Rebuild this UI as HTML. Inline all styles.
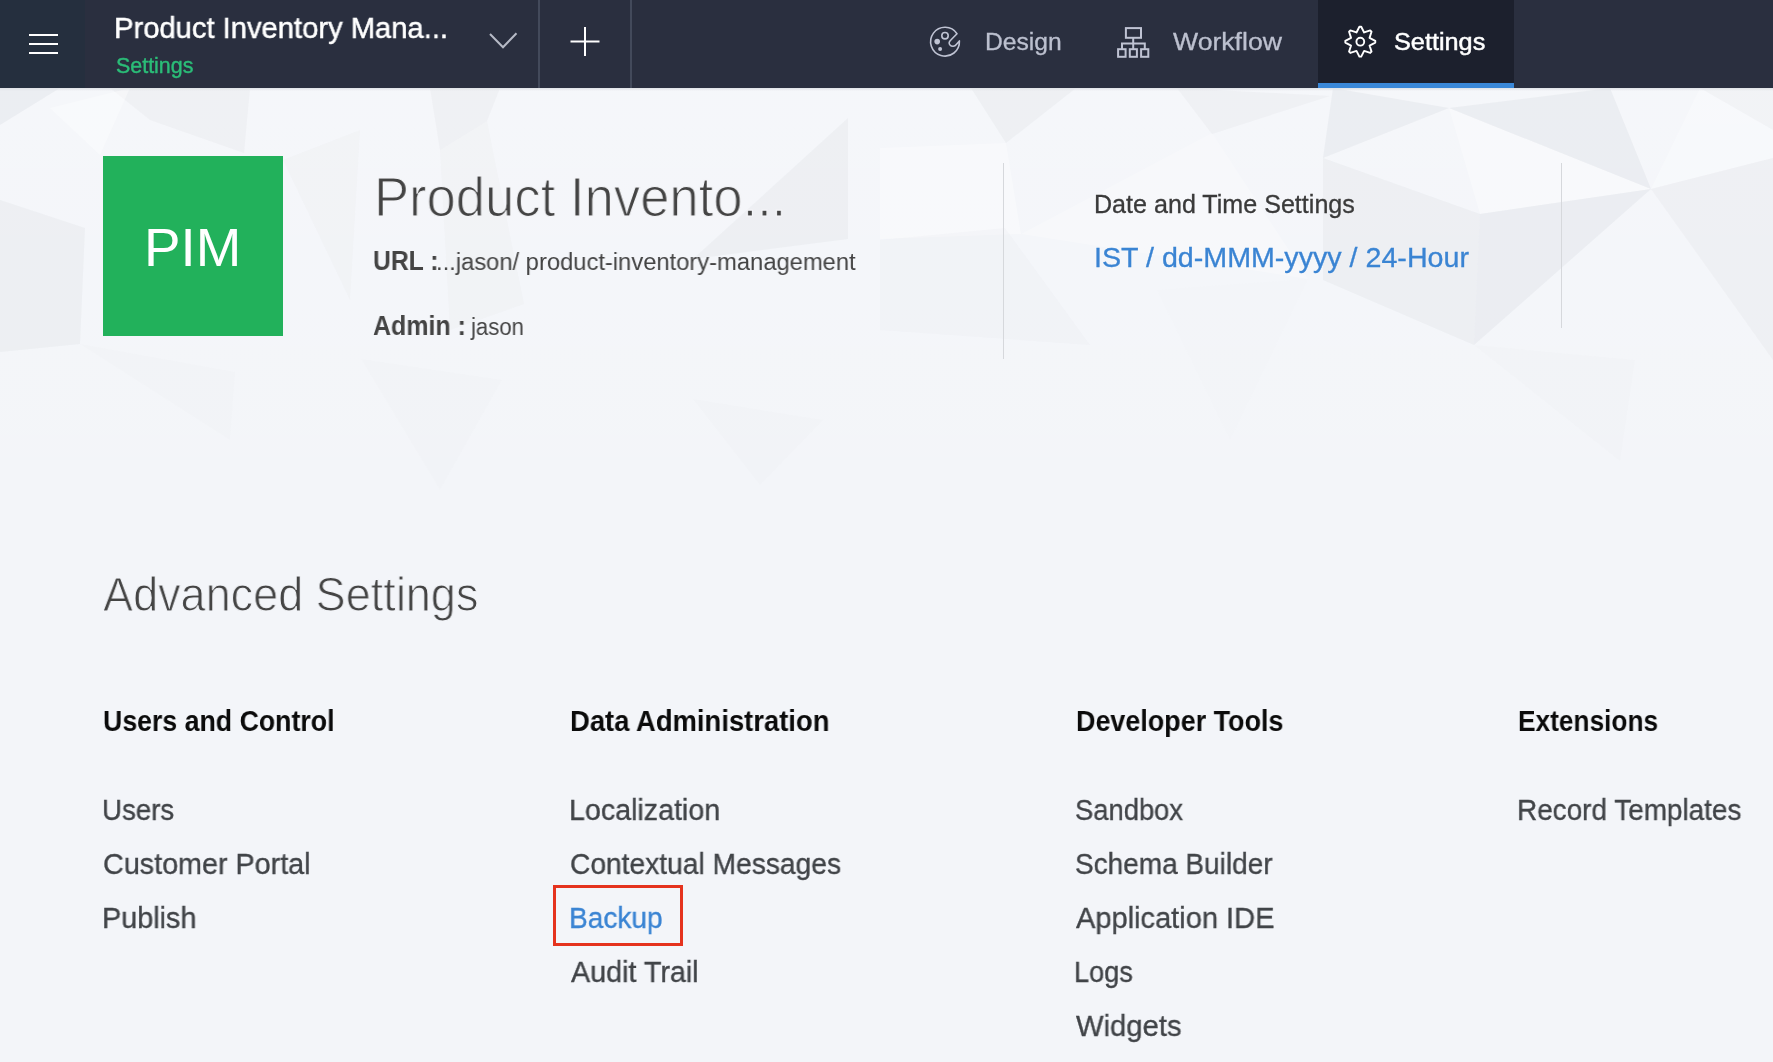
<!DOCTYPE html>
<html><head><meta charset="utf-8">
<style>
html,body{margin:0;padding:0;width:1773px;height:1062px;overflow:hidden;}
body{background:#f3f5f9;font-family:"Liberation Sans",sans-serif;position:relative;}
.t{position:absolute;white-space:nowrap;line-height:0;transform-origin:0 0;will-change:transform;}
.abs{position:absolute;}
#hdr{position:absolute;left:0;top:0;width:1773px;height:88px;background:#2a2f3f;}
#ham{position:absolute;left:0;top:0;width:85px;height:88px;background:#252f3e;}
.hl{position:absolute;left:29px;width:29px;height:2px;background:#fff;}
.vd{position:absolute;top:0;width:2px;height:88px;background:#434a5b;}
#tab{position:absolute;left:1318px;top:0;width:196px;height:88px;background:#1c202d;}
#tabline{position:absolute;left:1318px;top:83px;width:196px;height:5px;background:#3a88d8;}
#pim{position:absolute;left:103px;top:156px;width:180px;height:180px;background:#22b15b;}
.dv{position:absolute;width:2px;background:#d6d8dc;}
#redbox{position:absolute;left:553px;top:885px;width:124px;height:55px;border:3px solid #e5331e;}
</style></head><body>
<svg class="abs" style="left:0;top:88px" width="1773" height="974" viewBox="0 88 1773 974">
<!--BG-->
<polygon points="880,148 1006,143 1021,234 880,239" fill="#ffffff" fill-opacity="0.35"/>
<polygon points="1021,234 1212,133 1308,279" fill="#ffffff" fill-opacity="0.25"/>
<polygon points="1449,108 1651,189 1480,214" fill="#ffffff" fill-opacity="0.35"/>
<polygon points="1651,189 1773,158 1773,88 1700,88" fill="#ffffff" fill-opacity="0.3"/>
<defs><linearGradient id="wg" x1="0" y1="0" x2="0" y2="1"><stop offset="0" stop-color="#fff" stop-opacity="0.18"/><stop offset="1" stop-color="#fff" stop-opacity="0"/></linearGradient></defs><rect x="0" y="88" width="1773" height="480" fill="url(#wg)"/>
<polygon points="0,88 60,88 0,125" fill="#dcdee2" fill-opacity="0.360"/>
<polygon points="110,88 250,88 244,153 150,120" fill="#dcdee2" fill-opacity="0.240"/>
<polygon points="50,108 130,88 100,155" fill="#ffffff" fill-opacity="0.360"/>
<polygon points="0,200 85,228 80,344 0,352" fill="#dcdee2" fill-opacity="0.280"/>
<polygon points="80,344 235,372 230,440" fill="#dcdee2" fill-opacity="0.056"/>
<polygon points="283,160 360,130 350,300" fill="#dcdee2" fill-opacity="0.120"/>
<polygon points="430,88 500,88 487,121 440,150" fill="#dcdee2" fill-opacity="0.240"/>
<polygon points="487,121 524,304 450,330 440,150" fill="#dcdee2" fill-opacity="0.120"/>
<polygon points="848,118 693,259 848,239" fill="#dcdee2" fill-opacity="0.280"/>
<polygon points="361,359 502,380 440,490" fill="#dcdee2" fill-opacity="0.056"/>
<polygon points="693,399 823,420 760,485" fill="#dcdee2" fill-opacity="0.056"/>
<polygon points="971,88 1076,88 1006,143" fill="#dcdee2" fill-opacity="0.280"/>
<polygon points="1177,88 1330,96 1212,134" fill="#dcdee2" fill-opacity="0.240"/>
<polygon points="880,240 1005,228 1090,345 880,330" fill="#dcdee2" fill-opacity="0.112"/>
<polygon points="1157,290 1308,279 1230,440" fill="#dcdee2" fill-opacity="0.040"/>
<polygon points="1333,88 1449,108 1323,158" fill="#dcdee2" fill-opacity="0.360"/>
<polygon points="1449,108 1651,189 1610,88" fill="#dcdee2" fill-opacity="0.360"/>
<polygon points="1323,158 1480,214 1474,345 1323,280" fill="#dcdee2" fill-opacity="0.280"/>
<polygon points="1480,214 1651,189 1474,345" fill="#dcdee2" fill-opacity="0.360"/>
<polygon points="1651,189 1773,158 1773,360" fill="#dcdee2" fill-opacity="0.240"/>
<polygon points="1474,345 1635,360 1620,461" fill="#dcdee2" fill-opacity="0.056"/>
<polygon points="1700,88 1773,88 1773,130" fill="#dcdee2" fill-opacity="0.200"/>
</svg>
<div id="hdr"></div>
<div id="hshadow" style="position:absolute;left:0;top:88px;width:1773px;height:3px;background:linear-gradient(#dfe2e6,rgba(223,226,230,0));"></div>
<div id="ham"></div>
<div class="hl" style="top:34px"></div>
<div class="hl" style="top:43px"></div>
<div class="hl" style="top:52px"></div>
<div class="vd" style="left:538px"></div>
<div class="vd" style="left:630px"></div>
<div id="tab"></div>
<div id="tabline"></div>
<svg class="abs" style="left:0;top:0" width="1773" height="88" viewBox="0 0 1773 88">
 <polyline points="490,34 503,47.2 516.5,33.2" fill="none" stroke="#b6bac6" stroke-width="2"/>
 <line x1="570.5" y1="41.5" x2="599.5" y2="41.5" stroke="#fff" stroke-width="2"/>
 <line x1="585" y1="27" x2="585" y2="56" stroke="#fff" stroke-width="2"/>
 <g transform="translate(925,22)" fill="none" stroke="#bfc3d3" stroke-width="1.6">
  <path d="M32,11.7 A14.4,14.4 0 1 0 34.4,18.9 L31.3,22.6 C29.8,24.6 26.6,24.8 25,23 C23.6,21.4 24,19.6 25.6,18.3 Z" stroke-linejoin="round"/>
  <circle cx="20" cy="13.7" r="3.2"/>
  <circle cx="12.2" cy="19.6" r="2.8" fill="#bfc3d3" stroke="none"/>
  <circle cx="15.1" cy="26.9" r="2" fill="#bfc3d3" stroke="none"/>
 </g>
 <g transform="translate(1113,22)" fill="none" stroke="#bfc3d3" stroke-width="2">
  <rect x="12.9" y="6.1" width="15.1" height="9.7"/>
  <line x1="20.2" y1="15.8" x2="20.2" y2="27.2"/>
  <polyline points="9,27.2 9,21.5 31.8,21.5 31.8,27.2"/>
  <rect x="5.1" y="27.2" width="7.5" height="7.6"/>
  <rect x="16.8" y="27.2" width="7.1" height="7.6"/>
  <rect x="28.1" y="27.2" width="7.2" height="7.6"/>
 </g>
 <g transform="translate(1360.3,41.7)" fill="none" stroke="#ffffff" stroke-width="1.9" stroke-linejoin="round">
  <path id="gear" d="M-0.92,-14.97 L0.92,-14.97 L3.83,-9.24 L9.94,-11.23 L11.23,-9.94 L9.24,-3.83 L14.97,-0.92 L14.97,0.92 L9.24,3.83 L11.23,9.94 L9.94,11.23 L3.83,9.24 L0.92,14.97 L-0.92,14.97 L-3.83,9.24 L-9.94,11.23 L-11.23,9.94 L-9.24,3.83 L-14.97,0.92 L-14.97,-0.92 L-9.24,-3.83 L-11.23,-9.94 L-9.94,-11.23 L-3.83,-9.24 Z"/>
  <circle cx="0" cy="0" r="3.9"/>
 </g>
</svg>
<div id="pim"></div>
<div class="dv" style="left:1002.5px;top:163px;height:196px;width:1.5px"></div>
<div class="dv" style="left:1560.5px;top:163px;height:165px;width:1.5px"></div>
<div id="redbox"></div>
<div class="t" style="left:113.55px;top:28.44px;font-size:29.89px;font-weight:400;color:#ffffff;transform:scaleX(0.9764);-webkit-text-stroke:0.5px #ffffff;">Product Inventory Mana...</div>
<div class="t" style="left:115.80px;top:65.77px;font-size:21.43px;font-weight:400;color:#2bbd78;transform:scaleX(1.0001);-webkit-text-stroke:0.4px #2bbd78;">Settings</div>
<div class="t" style="left:984.80px;top:41.95px;font-size:24.67px;font-weight:400;color:#bcc0cf;transform:scaleX(0.9981);-webkit-text-stroke:0.3px #bcc0cf;">Design</div>
<div class="t" style="left:1173.30px;top:41.85px;font-size:24.39px;font-weight:400;color:#bcc0cf;transform:scaleX(1.0921);-webkit-text-stroke:0.3px #bcc0cf;">Workflow</div>
<div class="t" style="left:1394.38px;top:42.15px;font-size:24.67px;font-weight:400;color:#ffffff;transform:scaleX(1.0244);-webkit-text-stroke:0.5px #ffffff;">Settings</div>
<div class="t" style="left:144.28px;top:247.64px;font-size:54.42px;font-weight:400;color:#ffffff;transform:scaleX(1.0056);">PIM</div>
<div class="t" style="left:373.56px;top:196.79px;font-size:54.85px;font-weight:400;color:#444444;transform:scaleX(0.9592);-webkit-text-stroke:1.2px #f4f5f8;paint-order:fill stroke;">Product Invento...</div>
<div class="t" style="left:372.99px;top:260.87px;font-size:27.21px;font-weight:700;color:#444444;transform:scaleX(0.9084);">URL :</div>
<div class="t" style="left:435.62px;top:261.69px;font-size:23.97px;font-weight:400;color:#444444;transform:scaleX(0.9905);">...jason/ product-inventory-management</div>
<div class="t" style="left:372.90px;top:325.92px;font-size:26.79px;font-weight:700;color:#444444;transform:scaleX(0.9319);">Admin :</div>
<div class="t" style="left:470.92px;top:326.69px;font-size:23.97px;font-weight:400;color:#444444;transform:scaleX(0.9215);">jason</div>
<div class="t" style="left:1094.30px;top:204.20px;font-size:25.1px;font-weight:400;color:#3a3a3a;transform:scaleX(0.9983);-webkit-text-stroke:0.3px #3a3a3a;">Date and Time Settings</div>
<div class="t" style="left:1094.17px;top:257.97px;font-size:26.93px;font-weight:400;color:#3a84d3;transform:scaleX(1.0636);-webkit-text-stroke:0.3px #3a84d3;">IST / dd-MMM-yyyy / 24-Hour</div>
<div class="t" style="left:102.90px;top:595.34px;font-size:47.8px;font-weight:400;color:#444444;transform:scaleX(0.9417);-webkit-text-stroke:1.0px #f3f5f9;paint-order:fill stroke;">Advanced Settings</div>
<div class="t" style="left:103.10px;top:721.34px;font-size:29.61px;font-weight:700;color:#0b0b0b;transform:scaleX(0.9020);">Users and Control</div>
<div class="t" style="left:570.07px;top:721.14px;font-size:29.61px;font-weight:700;color:#0b0b0b;transform:scaleX(0.9258);">Data Administration</div>
<div class="t" style="left:1075.59px;top:721.14px;font-size:29.61px;font-weight:700;color:#0b0b0b;transform:scaleX(0.9087);">Developer Tools</div>
<div class="t" style="left:1518.01px;top:721.34px;font-size:29.61px;font-weight:700;color:#0b0b0b;transform:scaleX(0.8869);">Extensions</div>
<div class="t" style="left:101.63px;top:810.34px;font-size:29.61px;font-weight:400;color:#414448;transform:scaleX(0.9327);-webkit-text-stroke:0.35px #414448;">Users</div>
<div class="t" style="left:102.53px;top:864.34px;font-size:29.61px;font-weight:400;color:#414448;transform:scaleX(0.9705);-webkit-text-stroke:0.35px #414448;">Customer Portal</div>
<div class="t" style="left:101.56px;top:918.34px;font-size:29.61px;font-weight:400;color:#414448;transform:scaleX(0.9718);-webkit-text-stroke:0.35px #414448;">Publish</div>
<div class="t" style="left:569.07px;top:810.34px;font-size:29.61px;font-weight:400;color:#414448;transform:scaleX(0.9666);-webkit-text-stroke:0.35px #414448;">Localization</div>
<div class="t" style="left:570.05px;top:864.34px;font-size:29.61px;font-weight:400;color:#414448;transform:scaleX(0.9518);-webkit-text-stroke:0.35px #414448;">Contextual Messages</div>
<div class="t" style="left:569.10px;top:918.34px;font-size:29.61px;font-weight:400;color:#3a84d3;transform:scaleX(0.9481);-webkit-text-stroke:0.35px #3a84d3;">Backup</div>
<div class="t" style="left:571.00px;top:972.34px;font-size:29.61px;font-weight:400;color:#414448;transform:scaleX(0.9693);-webkit-text-stroke:0.35px #414448;">Audit Trail</div>
<div class="t" style="left:1075.38px;top:810.34px;font-size:29.61px;font-weight:400;color:#414448;transform:scaleX(0.9243);-webkit-text-stroke:0.35px #414448;">Sandbox</div>
<div class="t" style="left:1075.36px;top:864.34px;font-size:29.61px;font-weight:400;color:#414448;transform:scaleX(0.9450);-webkit-text-stroke:0.35px #414448;">Schema Builder</div>
<div class="t" style="left:1076.30px;top:918.34px;font-size:29.61px;font-weight:400;color:#414448;transform:scaleX(0.9802);-webkit-text-stroke:0.35px #414448;">Application IDE</div>
<div class="t" style="left:1074.47px;top:972.34px;font-size:29.61px;font-weight:400;color:#414448;transform:scaleX(0.9153);-webkit-text-stroke:0.35px #414448;">Logs</div>
<div class="t" style="left:1076.30px;top:1026.34px;font-size:29.61px;font-weight:400;color:#414448;transform:scaleX(0.9863);-webkit-text-stroke:0.35px #414448;">Widgets</div>
<div class="t" style="left:1517.31px;top:810.34px;font-size:29.61px;font-weight:400;color:#414448;transform:scaleX(0.9427);-webkit-text-stroke:0.35px #414448;">Record Templates</div>
</body></html>
